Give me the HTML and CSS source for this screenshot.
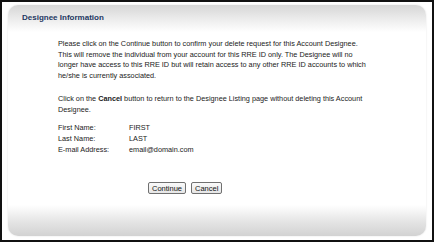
FILE: index.html
```html
<!DOCTYPE html>
<html lang="en">
<head>
    <meta charset="UTF-8">
    <title>Designee Information</title>
    <link rel="stylesheet" href="styles.css">
</head>
<body>
    <div class="frame">
        <div class="panel">
            <div class="panel-header">Designee Information</div>
            <div class="panel-body">
                <p class="intro">Please click on the Continue button to confirm your delete request for this Account Designee.<br>
                This will remove the individual from your account for this RRE ID only. The Designee will no<br>
                longer have access to this RRE ID but will retain access to any other RRE ID accounts to which<br>
                he/she is currently associated.</p>
                <p class="note">Click on the <b>Cancel</b> button to return to the Designee Listing page without deleting this Account<br>
                Designee.</p>

                <table class="details">
                    <tr><td class="label">First Name:</td><td>FIRST</td></tr>
                    <tr><td class="label">Last Name:</td><td>LAST</td></tr>
                    <tr><td class="label">E-mail Address:</td><td>email@domain.com</td></tr>
                </table>

                <div class="buttons">
                    <button type="button" class="btn">Continue</button>
                    <button type="button" class="btn">Cancel</button>
                </div>
            </div>
            <div class="panel-footer"></div>
        </div>
    </div>
</body>
</html>
```

FILE: styles.css
```css
html, body {
    margin: 0;
    padding: 0;
}
body {
    font-family: "Liberation Sans", Arial, sans-serif;
    font-size: 7.3px;
    color: #222;
    background: #fff;
}
.frame {
    width: 434px;
    height: 242px;
    box-sizing: border-box;
    border: 2px solid #111;
    padding: 3px 6px 4px 6px;
    background: #fff;
}
.panel {
    height: 100%;
    display: flex;
    flex-direction: column;
    border-radius: 10px;
    box-shadow: 0 0 2px rgba(0, 0, 0, 0.12);
}
.panel-header {
    height: 27px;
    box-sizing: border-box;
    padding: 8px 0 0 14px;
    border-radius: 10px 10px 0 0;
    background: linear-gradient(#d6d6d6, #e9e9e9 45%, #fff);
    font-size: 8px;
    font-weight: bold;
    color: #1d3761;
}
.panel-body {
    flex: 1;
    padding: 7px 0 0 50px;
}
.panel-body p {
    margin: 0;
    width: 340px;
    line-height: 10.7px;
    white-space: nowrap;
}
.panel-body .intro {
    margin-bottom: 12px;
}
.panel-body .note {
    margin-bottom: 7px;
}
.details {
    border-collapse: collapse;
}
.details td {
    padding: 0;
    height: 11px;
    line-height: 11px;
}
.details .label {
    width: 71px;
}
.buttons {
    margin-top: 27px;
    padding-left: 90px;
    display: flex;
    gap: 5px;
}
.btn {
    font-family: "Liberation Sans", Arial, sans-serif;
    font-size: 7.5px;
    color: #111;
    padding: 1px 3px;
    height: 12px;
    background: linear-gradient(#fafafa, #e6e6e6);
    border: 1px solid #707070;
    border-radius: 2px;
}
.panel-footer {
    height: 31px;
    border-radius: 0 0 10px 10px;
    background: linear-gradient(#fff, #e4e4e4 55%, #d2d2d2);
}
```
